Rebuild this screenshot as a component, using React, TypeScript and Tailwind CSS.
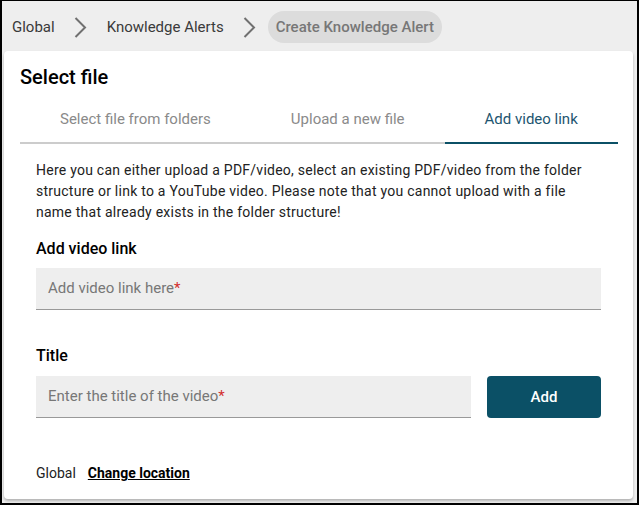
import React from "react";

function Chevron() {
  return (
    <span className="w-[36px] flex items-center justify-center">
      <svg width="13" height="21" viewBox="0 0 13 21" fill="none">
        <path d="M1.5 1 L11 10.5 L1.5 20" stroke="#707070" strokeWidth="2" />
      </svg>
    </span>
  );
}

export default function App() {
  return (
    <div
      className="w-[639px] h-[505px] box-border border-black border-t border-l-2 border-r-2 border-b-2 bg-[#eeeeee] flex flex-col pl-[2px] pr-[4px] overflow-hidden"
      style={{ fontFamily: "Roboto, 'Noto Sans', Arial, sans-serif" }}
    >
      <div className="h-[50px] shrink-0 flex items-center pt-[2px] text-[15px] text-[#3a3a3a] whitespace-nowrap">
        <span className="px-[8px]">Global</span>
        <Chevron />
        <span className="px-[8px]">Knowledge Alerts</span>
        <Chevron />
        <span className="h-[32px] px-[8px] rounded-full bg-[#dcdcdc] text-[#777] font-medium flex items-center">
          Create Knowledge Alert
        </span>
      </div>
      <div className="flex-1 bg-white rounded-[4px] shadow-[0_2px_3px_rgba(0,0,0,0.25)] px-[16px] pt-[14px] mb-[4px]">
        <div className="text-[20px] font-medium text-black leading-[24px]">Select file</div>
        <div className="mt-[19px] flex border-b-2 border-[#cccccc] text-[15px] leading-[22px] whitespace-nowrap">
          <div className="shrink-0 px-[40px] pb-[12px] text-[#8a8a8a]">Select file from folders</div>
          <div className="shrink-0 px-[40px] pb-[12px] text-[#8a8a8a]">Upload a new file</div>
          <div className="shrink-0 px-[40px] pb-[10px] text-[#1d5570] border-b-2 border-[#0b5066] -mb-[2px]">Add video link</div>
        </div>
        <div className="px-[16px]">
          <p className="mt-[16px] text-[14px] leading-[21px] tracking-[0.25px] text-[#222]">
            Here you can either upload a PDF/video, select an existing PDF/video from the folder structure or link to a YouTube video. Please note that you cannot upload with a file name that already exists in the folder structure!
          </p>
          <div className="mt-[16px] text-[16px] font-medium text-black leading-[20px]">Add video link</div>
          <div className="mt-[9px] h-[42px] bg-[#eeeeee] border-b border-[#999] flex items-center px-[12px] text-[15px] text-[#777]">
            Add video link here<span className="text-[#d32f2f]">*</span>
          </div>
          <div className="mt-[36px] text-[16px] font-medium text-black leading-[20px]">Title</div>
          <div className="mt-[10px] flex gap-[16px]">
            <div className="flex-1 h-[42px] bg-[#eeeeee] border-b border-[#999] flex items-center px-[12px] text-[15px] text-[#777]">
              Enter the title of the video<span className="text-[#d32f2f]">*</span>
            </div>
            <button className="w-[114px] h-[42px] rounded-[4px] bg-[#0b5066] text-white text-[15px] font-medium">
              Add
            </button>
          </div>
          <div className="mt-[45px] flex items-center gap-[12px] text-[14px] leading-[20px]">
            <span className="text-[#222]">Global</span>
            <span className="font-bold underline text-black">Change location</span>
          </div>
        </div>
      </div>
    </div>
  );
}
